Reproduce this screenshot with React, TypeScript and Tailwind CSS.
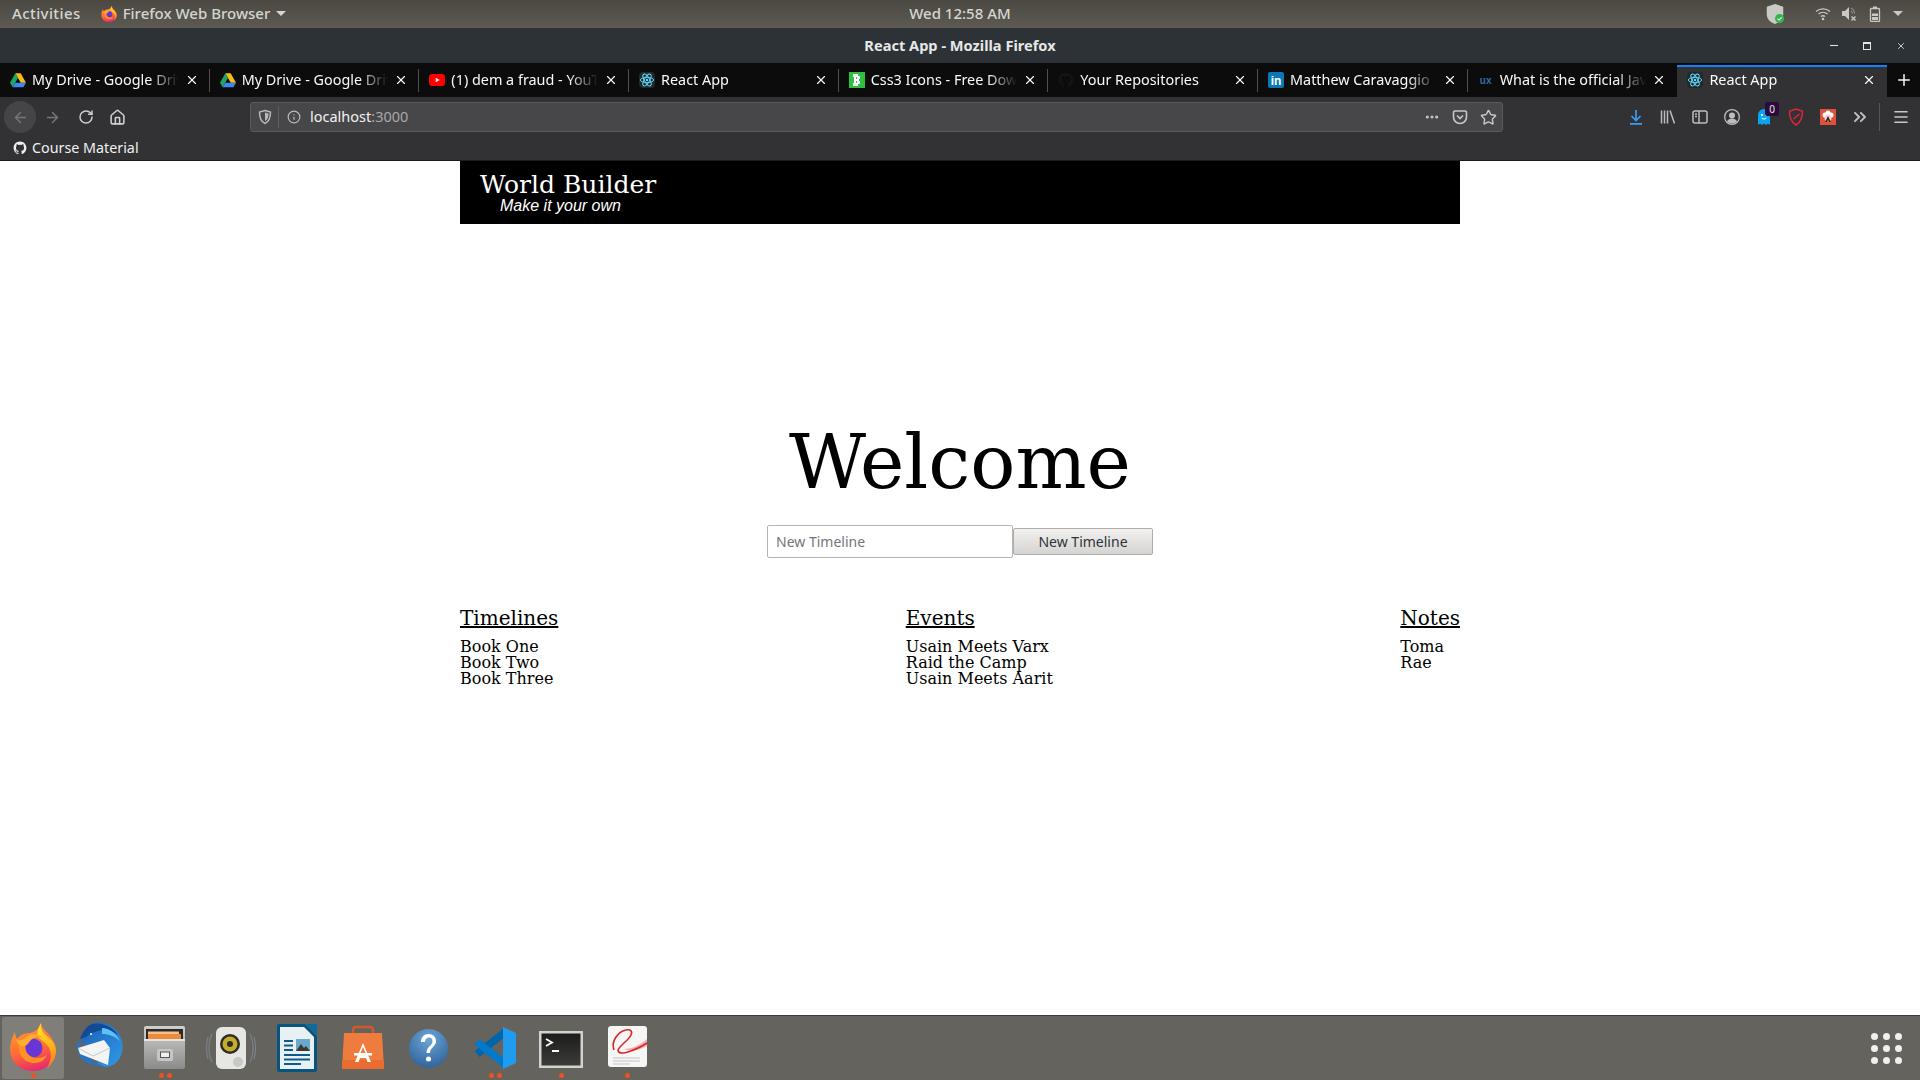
import React from "react";
import {
  ArrowLeft,
  ArrowRight,
  RotateCw,
  Home,
  Info,
  Star,
  X,
  Plus,
  Menu,
  ChevronsRight,
  Ellipsis,
} from "lucide-react";

const ui = "font-['Noto_Sans',sans-serif]";
const serif = "font-['DejaVu_Serif',serif]";

const githubPath =
  "M12 1C5.9 1 1 5.9 1 12c0 4.9 3.2 9 7.5 10.500.6.1.8-.2.8-.5v-2c-3.1.7-3.7-1.300-3.7-1.300-.5-1.300-1.200-1.600-1.200-1.600-1-.7.1-.7.1-.7 1.100.1 1.700 1.100 1.700 1.100 1 1.700 2.600 1.200 3.200.9.1-.7.4-1.200.7-1.500-2.500-.3-5-1.200-5-5.400 0-1.200.4-2.200 1.100-3-.1-.3-.5-1.400.1-2.900 0 0 .9-.3 3 1.100a10.500 10.500 0 0 1 5.500 0c2.100-1.400 3-1.100 3-1.100.6 1.500.2 2.600.1 2.900.7.8 1.100 1.800 1.100 3 0 4.200-2.600 5.100-5 5.400.4.3.8 1 .8 2v3c0 .3.2.6.8.5C19.800 21 23 16.900 23 12c0-6.100-4.900-11-11-11z";

/* ---------- small favicons ---------- */
const DriveIcon = () => (
  <svg viewBox="0 0 24 22" className="w-4 h-4 shrink-0">
    <path d="M8 1h8l8 14h-8z" fill="#f8bc16" />
    <path d="M8 1l4 7-8 14-4-7z" fill="#1fa463" />
    <path d="M8 15h16l-4 7H4z" fill="#4285f4" />
  </svg>
);

const YoutubeIcon = () => (
  <svg viewBox="0 0 24 18" className="w-4 h-4 shrink-0">
    <rect width="24" height="18" rx="5" fill="#f00" />
    <path d="M10 5.500l6 3.500-6 3.500z" fill="#fff" />
  </svg>
);

const ReactIcon = () => (
  <div className="w-4 h-4 rounded-sm bg-[#1e2a2e] flex items-center justify-center shrink-0">
    <svg viewBox="0 0 24 24" className="w-4 h-4" fill="none" stroke="#61dafb" strokeWidth="1.400">
      <ellipse cx="12" cy="12" rx="10" ry="4" />
      <ellipse cx="12" cy="12" rx="10" ry="4" transform="rotate(60 12 12)" />
      <ellipse cx="12" cy="12" rx="10" ry="4" transform="rotate(120 12 12)" />
      <circle cx="12" cy="12" r="1.800" fill="#61dafb" stroke="none" />
    </svg>
  </div>
);

const CssIcon = () => (
  <div className="w-4 h-4 bg-[#2fc043] flex items-center justify-center shrink-0">
    <svg viewBox="0 0 16 16" className="w-4 h-4">
      <path d="M4 2h5v2h2v3h-1v2h1v3H9v2H4v-3h1V5H4z" fill="#fff" />
      <path d="M7 5h1v2H7zM7 9h1v2H7z" fill="#2fc043" />
    </svg>
  </div>
);

const GithubDark = () => (
  <svg viewBox="0 0 24 24" className="w-4 h-4 shrink-0" fill="#141416">
    <path d={githubPath} />
  </svg>
);

const LinkedinIcon = () => (
  <div className="w-4 h-4 bg-[#0a78b5] rounded-[2px] flex items-end justify-center shrink-0 text-white text-[12px] leading-[14px] font-bold font-['Liberation_Sans',sans-serif]">
    in
  </div>
);

const UxIcon = () => (
  <div className="w-4 h-4 flex items-center justify-center shrink-0 text-[#2f6fa8] text-[10px] font-bold font-['Liberation_Sans',sans-serif]">
    ux
  </div>
);

const tabs = [
  { title: "My Drive - Google Drive", icon: <DriveIcon /> },
  { title: "My Drive - Google Drive", icon: <DriveIcon /> },
  { title: "(1) dem a fraud - YouTube", icon: <YoutubeIcon /> },
  { title: "React App", icon: <ReactIcon /> },
  { title: "Css3 Icons - Free Download", icon: <CssIcon /> },
  { title: "Your Repositories", icon: <GithubDark /> },
  { title: "Matthew Caravaggio | LinkedIn", icon: <LinkedinIcon /> },
  { title: "What is the official JavaScript", icon: <UxIcon /> },
  { title: "React App", icon: <ReactIcon />, active: true },
];

const FirefoxLogo = ({ className }: { className: string }) => (
  <svg viewBox="0 0 54 54" className={className}>
    <defs>
      <linearGradient id="ffBody" x1="0.3" y1="0" x2="0.6" y2="1">
        <stop offset="0" stopColor="#ffa02e" />
        <stop offset="0.55" stopColor="#ff6b35" />
        <stop offset="1" stopColor="#e8276e" />
      </linearGradient>
      <linearGradient id="ffTail" x1="0.3" y1="0" x2="0.6" y2="1">
        <stop offset="0" stopColor="#ffe226" />
        <stop offset="0.6" stopColor="#ffb31f" />
        <stop offset="1" stopColor="#ff7a1f" />
      </linearGradient>
    </defs>
    <path d="M9 12c0 3 1 5 2 7 3-4 8-6 13-6 5-1 9-4 11-10 1 6 6 9 10 14 3 4 5 9 5 14 0 9-9 20-23 20C13 51 4 41 4 29c0-6 2-12 5-17z" fill="url(#ffBody)" />
    <path d="M35 3c-1 6 2 10 6 13 5 4 9 8 9 15 0 7-4 13-9 17 3-5 5-12 3-18-2-6-8-9-12-13-2-4 1-10 3-14z" fill="url(#ffTail)" />
    <circle cx="27" cy="28" r="9.500" fill="#6a35d6" />
    <path d="M13 23c-2 10 5 20 15 20 6 0 11-3 13-8-4 3-10 4-15 2-5-2-8-8-6-13z" fill="#ff9226" />
    <path d="M10 19c5 3 8 0 12-3 5-3 12-2 15 2-4-2-9-1-12 2-3 3-3 5-7 6-3 1-7-2-8-7z" fill="#ffad2e" />
  </svg>
);

/* ---------- desktop shell ---------- */
const TopBar = () => (
  <div className={`h-7 shrink-0 grid grid-cols-3 items-center px-3 pb-[1px] text-[15px] font-medium text-[#d6d5d0] bg-gradient-to-b from-[#4a4840] to-[#5c5a52] ${ui}`}>
    <div className="flex items-center">
      <span className="tracking-[0.4px]">Activities</span>
      <FirefoxLogo className="w-[18px] h-[18px] ml-[19px] mr-[5px]" />
      <span>Firefox Web Browser</span>
      <span className="ml-[6px] w-0 h-0 border-x-[5px] border-x-transparent border-t-[5px] border-t-[#d6d5d0]" />
    </div>
    <div className="text-center">Wed 12:58 AM</div>
    <div className="flex items-center justify-end gap-[10px] pr-[5px] text-[#c9c8c4]">
      <svg viewBox="0 0 24 24" className="w-[22px] h-[22px] mr-[19px]">
        <path d="M12 1l9 3v8c0 6-4 9-9 11-5-2-9-5-9-11V4z" fill="#c9c9c5" />
        <circle cx="17" cy="17" r="5" fill="#33b54a" />
        <path d="M14.800 17l1.600 1.600 2.800-2.800" stroke="#fff" strokeWidth="1.200" fill="none" />
      </svg>
      <svg viewBox="0 0 16 16" className="w-4 h-4" fill="none" stroke="currentColor" strokeWidth="1.400">
        <path d="M1 5.500c4-3.500 10-3.500 14 0M3.500 8c2.600-2.200 6.400-2.200 9 0M6 10.500c1.200-1 2.800-1 4 0" />
        <circle cx="8" cy="13" r="1.300" fill="currentColor" stroke="none" />
      </svg>
      <svg viewBox="0 0 16 16" className="w-4 h-4" fill="currentColor">
        <path d="M1 5h3l4-4v13l-4-4H1z" />
        <path d="M10 2c2.200 1.200 3.500 3.200 3.500 5.500M10 5c1 .5 1.500 1.500 1.500 2.500" fill="none" stroke="currentColor" strokeWidth="1.200" opacity="0.500" />
        <path d="M10.500 10.500l4 4m0-4l-4 4" fill="none" stroke="currentColor" strokeWidth="1.400" />
      </svg>
      <svg viewBox="0 0 16 16" className="w-4 h-4" fill="none" stroke="currentColor" strokeWidth="1.300">
        <rect x="3.500" y="2.500" width="9" height="13" rx="1" />
        <path d="M6 0.500h4v2H6z" fill="currentColor" stroke="none" />
        <rect x="5" y="7.500" width="6" height="2.500" fill="currentColor" stroke="none" />
        <rect x="5" y="11" width="6" height="3" fill="currentColor" stroke="none" />
      </svg>
      <span className="w-0 h-0 border-x-[5px] border-x-transparent border-t-[5px] border-t-[#c9c8c4]" />
    </div>
  </div>
);

const TitleBar = () => (
  <div className="h-[35px] shrink-0 bg-[#2d3236] flex items-center relative">
    <div className={`w-full text-center text-[14.6px] font-bold text-[#e6e7e6] ${ui}`}>React App - Mozilla Firefox</div>
    <div className="absolute right-[14px] top-0 h-full flex items-center gap-[25px] text-[#e6e7e6]">
      <span className="w-2 h-px bg-current" />
      <span className="w-2 h-2 border border-current border-t-2" />
      <X size={10} strokeWidth={2} />
    </div>
  </div>
);

const TabStrip = () => (
  <div className={`h-[34px] shrink-0 bg-[#0c0c0d] flex items-end text-[14.4px] text-[#f9f9fa] ${ui}`}>
    {tabs.map((tab, i) => {
      const hideSep = tab.active || tabs[i + 1]?.active;
      return (
        <div
          key={i}
          className={`flex-1 min-w-0 flex items-center gap-[6px] pl-[10px] pr-[11px] relative ${
            tab.active ? "h-[32px] bg-[#323234] border-t-2 border-[#0a84ff] pb-[4px]" : "h-[34px]"
          }`}
        >
          {tab.icon}
          <span className="flex-1 overflow-hidden whitespace-nowrap [mask-image:linear-gradient(to_right,black_80%,transparent)]">
            {tab.title}
          </span>
          <X size={14} strokeWidth={2} className="shrink-0" />
          {!hideSep && <span className="absolute right-0 top-[6px] bottom-[5px] w-px bg-[#4f4f52]" />}
        </div>
      );
    })}
    <div className="w-[33px] h-[34px] shrink-0 flex items-center justify-center">
      <Plus size={18} strokeWidth={2} />
    </div>
  </div>
);

const ShieldIcon = () => (
  <svg viewBox="0 0 16 16" className="w-4 h-4" fill="none" stroke="#b8b8ba" strokeWidth="1.500">
    <path d="M8 1.500l5.500 1.500c0 6-1 9.500-5.500 11.500C3.500 12.500 2.500 9 2.500 3z" />
    <path d="M8 3.500l3.500 1c0 3.500-.7 6-3.500 7.500z" fill="#b8b8ba" stroke="none" />
  </svg>
);

const PocketIcon = () => (
  <svg viewBox="0 0 16 16" className="w-4 h-4" fill="none" stroke="#c8c8ca" strokeWidth="1.600">
    <path d="M1.500 3.500a1.500 1.500 0 0 1 1.500-1.500h10a1.500 1.500 0 0 1 1.500 1.500V8a6.500 6.500 0 0 1-13 0z" />
    <path d="M5 6.500l3 3 3-3" />
  </svg>
);

const DownloadIcon = () => (
  <svg viewBox="0 0 16 16" className="w-4 h-4" fill="none" stroke="#3c9af5" strokeWidth="1.700">
    <path d="M8 1v10M3.500 7l4.500 4.500L12.500 7M2 14.800h12" />
  </svg>
);

const LibraryIcon = () => (
  <svg viewBox="0 0 16 16" className="w-4 h-4" fill="none" stroke="#bdbdbf" strokeWidth="1.500">
    <path d="M1.500 1.500v13M4.500 1.500v13M7.500 1.500v13M10 1.500l4.500 13" />
  </svg>
);

const SidebarIcon = () => (
  <svg viewBox="0 0 16 16" className="w-4 h-4" fill="none" stroke="#bdbdbf" strokeWidth="1.500">
    <rect x="1" y="2" width="14" height="12" rx="2" />
    <path d="M7 2v12" />
    <path d="M3 5h2M3 7.500h2" />
  </svg>
);

const AccountIcon = () => (
  <svg viewBox="0 0 16 16" className="w-4 h-4" fill="#bdbdbf">
    <path fillRule="evenodd" d="M8 0a8 8 0 1 1 0 16A8 8 0 0 1 8 0zm0 1.300a6.700 6.700 0 1 0 0 13.400A6.700 6.700 0 0 0 8 1.300z" />
    <circle cx="8" cy="6.500" r="3" />
    <path d="M3 12.300c1-2 3-2.800 5-2.800s4 .8 5 2.800A6 6 0 0 1 8 14.500a6 6 0 0 1-5-2.200z" />
  </svg>
);

const GhostIcon = () => (
  <div className="relative w-4 h-5 flex items-center">
    <svg viewBox="0 0 16 20" className="w-4 h-5">
      <path d="M2 8a6 6 0 0 1 12 0v10l-2-1.500L10 18l-2-1.500L6 18l-2-1.500L2 18z" fill="#0aa5f0" />
      <circle cx="6" cy="8" r="1" fill="#fff" />
      <circle cx="10" cy="8" r="1" fill="#fff" />
      <path d="M5.500 11c1.500 1.300 3.500 1.300 5 0" stroke="#fff" fill="none" />
    </svg>
    <span className="absolute -top-[5px] left-[9px] w-[14px] h-[14px] rounded-[2px] bg-[#2c0a3e] text-[#e6e6e6] text-[10px] leading-[14px] text-center">0</span>
  </div>
);

const RedShieldIcon = () => (
  <svg viewBox="0 0 16 18" className="w-4 h-[18px]" fill="none" stroke="#e2233f" strokeWidth="1.500">
    <path d="M8 1l6.500 2.200c0 7-1.500 10.800-6.500 13.800C3 14 1.500 10.200 1.500 3.200z" />
    <path d="M5.500 11l6-5" />
  </svg>
);

const RedBoxIcon = () => (
  <svg viewBox="0 0 16 16" className="w-4 h-4">
    <rect width="16" height="16" fill="#e1503a" />
    <circle cx="5" cy="6" r="2.500" fill="#fff" />
    <circle cx="11" cy="6" r="2.500" fill="#fff" />
    <circle cx="8" cy="4" r="2.500" fill="#fff" />
    <circle cx="8" cy="9" r="3.500" fill="#f3d5cf" />
    <path d="M8 7l3 6H9l-1-2-1 2H5z" fill="#3a2320" />
  </svg>
);

const Toolbar = () => (
  <div className={`h-[37px] pt-[3px] shrink-0 bg-[#323234] flex items-center ${ui}`}>
    <div className="w-[250px] shrink-0 flex items-center pl-[4px] text-[#d0d0d2]">
      <div className="w-8 h-8 rounded-full bg-[#454547] flex items-center justify-center text-[#77777a]">
        <ArrowLeft size={17} strokeWidth={2} />
      </div>
      <div className="w-[33px] flex justify-center text-[#77777a]">
        <ArrowRight size={17} strokeWidth={2} />
      </div>
      <div className="w-[33px] flex justify-center">
        <RotateCw size={16} strokeWidth={2.200} />
      </div>
      <div className="w-[31px] flex justify-center">
        <Home size={17} strokeWidth={2.200} />
      </div>
    </div>
    <div className="w-[1253px] shrink-0 h-[30px] rounded-[3px] bg-[#474749] border border-[#5a5a5c] flex items-center text-[14.5px]">
      <div className="w-[28px] h-[22px] flex items-center justify-center border-r border-[#5e5e60]">
        <ShieldIcon />
      </div>
      <Info size={14} className="ml-[8px] text-[#bdbdbf]" />
      <span className="ml-[9px] text-[#f2f2f3]">localhost</span>
      <span className="text-[#a8a8aa]">:3000</span>
      <div className="ml-auto flex items-center gap-[12px] pr-[5px] text-[#c8c8ca]">
        <Ellipsis size={16} strokeWidth={2.600} />
        <PocketIcon />
        <Star size={17} strokeWidth={2} />
      </div>
    </div>
    <div className="flex-1 flex items-center justify-end h-full pr-[1px]">
      <div className="flex items-center text-[#bdbdbf]">
        <div className="w-8 flex justify-center"><DownloadIcon /></div>
        <div className="w-8 flex justify-center"><LibraryIcon /></div>
        <div className="w-8 flex justify-center"><SidebarIcon /></div>
        <div className="w-8 flex justify-center"><AccountIcon /></div>
        <div className="w-8 flex justify-center"><GhostIcon /></div>
        <div className="w-8 flex justify-center"><RedShieldIcon /></div>
        <div className="w-8 flex justify-center"><RedBoxIcon /></div>
        <div className="w-8 flex justify-center"><ChevronsRight size={20} strokeWidth={2.400} /></div>
      </div>
      <div className="w-px h-[28px] bg-[#56565a] mx-[3px]" />
      <div className="w-[36px] flex justify-center text-[#c8c8ca]"><Menu size={18} strokeWidth={2.200} /></div>
    </div>
  </div>
);

const BookmarkBar = () => (
  <div className={`h-[27px] pt-[2px] shrink-0 bg-[#323234] flex items-center pl-[13px] gap-[5px] text-[14.3px] text-[#f0f0f1] border-b border-[#1c1c1e] ${ui}`}>
    <svg viewBox="0 0 24 24" className="w-[14px] h-[14px]" fill="#f0f0f1">
      <path d={githubPath} />
    </svg>
    <span>Course Material</span>
  </div>
);

/* ---------- dock icons ---------- */
const FirefoxDock = () => <FirefoxLogo className="w-[54px] h-[54px]" />;

const ThunderbirdDock = () => (
  <svg viewBox="0 0 54 54" className="w-[54px] h-[54px]">
    <defs>
      <linearGradient id="tbBody" x1="0" y1="0" x2="1" y2="1">
        <stop offset="0" stopColor="#1b5fb5" />
        <stop offset="1" stopColor="#2f9be8" />
      </linearGradient>
    </defs>
    <path d="M20 4c6-3 17-1 23 5 6 6 9 14 7 23-2 9-9 15-17 15l-8-3 6-16-22-5c2-7 5-16 11-19z" fill="url(#tbBody)" />
    <path d="M20 4c9-2 20 2 26 11-7-5-14-6-20-4-4 1-9 3-12 6l-6 2c2-6 6-13 12-15z" fill="#114a97" />
    <path d="M30 8c7 0 14 5 18 13-6-5-11-7-18-7z" fill="#5fc0f5" />
    <path d="M6 20c-2 8 0 15 5 20 5 4 13 6 20 6-7-2-14-7-19-14z" fill="#2673c6" />
    <path d="M6 28l26-8 6 8-2 17-28-11z" fill="#f4f4f4" />
    <path d="M6 28l15 8 17-8" fill="none" stroke="#c8c8c8" strokeWidth="1" />
    <circle cx="19" cy="14" r="1" fill="#fff" />
  </svg>
);

const FilesDock = () => (
  <svg viewBox="0 0 54 54" className="w-[54px] h-[54px]">
    <defs>
      <linearGradient id="cabBody" x1="0" y1="0" x2="0" y2="1">
        <stop offset="0" stopColor="#cfcfcd" />
        <stop offset="1" stopColor="#8b8b89" />
      </linearGradient>
    </defs>
    <rect x="6" y="6" width="41" height="43" rx="2" fill="url(#cabBody)" />
    <rect x="8" y="9" width="37" height="10" fill="#2a2a2a" />
    <rect x="10" y="14" width="33" height="5" fill="#ee8a3c" />
    <rect x="10" y="11.500" width="31" height="2.500" fill="#f4c08c" />
    <rect x="6" y="19" width="41" height="2" fill="#e4e4e2" />
    <rect x="19" y="29" width="16" height="12" rx="2" fill="#c6c6c4" />
    <rect x="22.500" y="32" width="9" height="5.500" fill="#f0f0ee" stroke="#555" strokeWidth="1" />
  </svg>
);

const SpeakerDock = () => (
  <svg viewBox="0 0 54 54" className="w-[54px] h-[54px]">
    <path d="M8 14c-4 8-4 20 0 28M4 17c-2 7-2 15 0 22M46 14c4 8 4 20 0 28M50 17c2 7 2 15 0 22" stroke="#7b8188" strokeWidth="1.200" fill="none" />
    <rect x="12" y="7" width="30" height="42" rx="6" fill="#e6e6e2" />
    <circle cx="26" cy="24" r="10" fill="#2e2c22" />
    <circle cx="26" cy="24" r="7.500" fill="#c4ac2c" />
    <circle cx="26" cy="24" r="3" fill="#2e2c22" />
    <circle cx="34" cy="42" r="5" fill="#c8c8c4" />
  </svg>
);

const WriterDock = () => (
  <svg viewBox="0 0 54 54" className="w-[54px] h-[54px]">
    <path d="M7 6a2 2 0 0 1 2-2h26l12 12v34a2 2 0 0 1-2 2H9a2 2 0 0 1-2-2z" fill="#06557f" />
    <path d="M10 7h24l10 10v32H10z" fill="#e8f0f4" />
    <path d="M36 4h11v11z" fill="#0b6b9c" />
    <rect x="14" y="20" width="9" height="2" fill="#0b5c88" />
    <rect x="14" y="24.500" width="9" height="2" fill="#0b5c88" />
    <rect x="14" y="29" width="9" height="2" fill="#0b5c88" />
    <rect x="14" y="34" width="26" height="2" fill="#0b5c88" />
    <rect x="14" y="38.500" width="26" height="2" fill="#0b5c88" />
    <rect x="14" y="43" width="17" height="2" fill="#0b5c88" />
    <rect x="26" y="19" width="14" height="12" fill="#6aa8cc" />
    <path d="M26 31l5-7 3 4 2-2 4 5z" fill="#3a3a32" />
  </svg>
);

const StoreDock = () => (
  <svg viewBox="0 0 54 54" className="w-[54px] h-[54px]">
    <path d="M17 22V10a3 3 0 0 1 3-3h14a3 3 0 0 1 3 3v12" fill="none" stroke="#d25a26" strokeWidth="2.500" />
    <path d="M8 13h38l2 36H6z" fill="#ee7c3f" />
    <path d="M6 40h42v9H6z" fill="#e96d30" />
    <path d="M27 23l-8 19h3.500l1.500-4h6l1.500 4H35zM24.500 33l2.500-6 2.500 6z" fill="#fff" fillRule="evenodd" />
    <rect x="18" y="33" width="18" height="2.500" fill="#fff" />
  </svg>
);

const HelpDock = () => (
  <svg viewBox="0 0 54 54" className="w-[54px] h-[54px]">
    <defs>
      <radialGradient id="helpBg" cx="0.5" cy="0.25" r="0.8">
        <stop offset="0" stopColor="#6fa6d6" />
        <stop offset="1" stopColor="#2b6199" />
      </radialGradient>
    </defs>
    <circle cx="26.500" cy="28.500" r="19.500" fill="url(#helpBg)" />
    <path d="M19 22c0-5 3-8 7.500-8 4.500 0 7.500 3 7.500 7 0 6-6 6-6 12h-3.500c0-7 6-7 6-12 0-2-1.500-3.500-3.500-3.500S23 19 23 22z" fill="#fff" />
    <circle cx="26.500" cy="39" r="2.500" fill="#fff" />
  </svg>
);

const VscodeDock = () => (
  <svg viewBox="0 0 54 54" className="w-[54px] h-[54px]">
    <path d="M37 12L9 34" stroke="#0065a9" strokeWidth="7.500" />
    <path d="M37 44L9 22" stroke="#007acc" strokeWidth="7.500" />
    <path d="M35 7l13 6v30l-13 6z" fill="#1f9cf0" />
  </svg>
);

const TerminalDock = () => (
  <svg viewBox="0 0 54 54" className="w-[54px] h-[54px]">
    <defs>
      <linearGradient id="termBg" x1="0" y1="0" x2="0" y2="1">
        <stop offset="0" stopColor="#1c1c1a" />
        <stop offset="1" stopColor="#3c3c3a" />
      </linearGradient>
    </defs>
    <rect x="5" y="11" width="44" height="37" fill="#d2d2cf" />
    <rect x="7.500" y="13.500" width="39" height="32" fill="url(#termBg)" />
    <path d="M12 19l6 3.500-6 3.500" stroke="#fff" strokeWidth="1.800" fill="none" />
    <path d="M18 31h7" stroke="#fff" strokeWidth="2" />
  </svg>
);

const PdfDock = () => (
  <svg viewBox="0 0 54 54" className="w-[54px] h-[54px]">
    <rect x="8" y="6" width="39" height="41" rx="3" fill="#f6f6f4" />
    <path d="M24 29c8 0 16-4 23-10v7c-7 4-15 6-23 3z" fill="#efb1b1" />
    <path d="M14 30c-3-8 3-18 12-20 4-1 7 1 5 5-3 6-10 9-13 15 0 3 4 4 10 2 6-2 13-5 19-9" stroke="#d8272d" strokeWidth="1.600" fill="none" />
    <path d="M13 38h27M13 41h27M13 44h17" stroke="#c4c4c2" strokeWidth="1" />
  </svg>
);

const dockItems = [
  { icon: <FirefoxDock />, dots: 1, active: true },
  { icon: <ThunderbirdDock />, dots: 0 },
  { icon: <FilesDock />, dots: 2 },
  { icon: <SpeakerDock />, dots: 0 },
  { icon: <WriterDock />, dots: 0 },
  { icon: <StoreDock />, dots: 0 },
  { icon: <HelpDock />, dots: 0 },
  { icon: <VscodeDock />, dots: 2 },
  { icon: <TerminalDock />, dots: 1 },
  { icon: <PdfDock />, dots: 1 },
];

const Dock = () => (
  <div className="h-[65px] shrink-0 bg-[#65635e] border-t border-[#3c3b38] flex items-center justify-between pl-[2px] pr-[18px]">
    <div className="flex">
      {dockItems.map((item, i) => (
        <div
          key={i}
          className={`w-[62px] h-[62px] mr-[4px] rounded-[3px] flex flex-col items-center justify-between ${item.active ? "bg-[#7f7e79]" : ""}`}
        >
          <div className="h-[56px] pt-[4px] flex items-center justify-center">{item.icon}</div>
          <div className="h-[6px] flex gap-[3px]">
            {Array.from({ length: item.dots }).map((_, d) => (
              <span key={d} className="w-[5px] h-[5px] rounded-full bg-[#e95420]" />
            ))}
          </div>
        </div>
      ))}
    </div>
    <div className="grid grid-cols-3 gap-[5px]">
      {Array.from({ length: 9 }).map((_, i) => (
        <span key={i} className="w-[7px] h-[7px] rounded-full bg-[#f0f0ee]" />
      ))}
    </div>
  </div>
);

/* ---------- the actual page ---------- */
const columns = [
  { title: "Timelines", items: ["Book One", "Book Two", "Book Three"] },
  { title: "Events", items: ["Usain Meets Varx", "Raid the Camp", "Usain Meets Aarit"] },
  { title: "Notes", items: ["Toma", "Rae"] },
];

const Page = () => (
  <div className={`flex-1 min-h-0 bg-white text-black ${serif}`}>
    <div className="w-[1000px] mx-auto">
      <header className="h-[63px] bg-black text-white pl-5 pt-[9px]">
        <h2 className="text-[25px] leading-[30px]">World Builder</h2>
        <p className="pl-5 text-[16px] leading-[12px] italic font-['Liberation_Sans',sans-serif]">Make it your own</p>
      </header>

      <h1 className="mt-[195px] text-center text-[75px] leading-[86px]">Welcome</h1>

      <div className={`mt-[20px] flex justify-center items-center text-[14px] ${ui}`}>
        <input
          placeholder="New Timeline"
          className="w-[246px] h-[33px] px-2 bg-white border border-[#b5b5b5] rounded-[2px] placeholder:text-[#75757a]"
        />
        <button className="w-[140px] h-[27px] bg-gradient-to-b from-[#f2f1f0] to-[#d6d4d2] border border-[#b0aeab] rounded-[2px] text-[#2e3436]">
          New Timeline
        </button>
      </div>

      <div className="mt-[48px] flex justify-between">
        {columns.map((col) => (
          <div key={col.title}>
            <h3 className="text-[20px] leading-[24px] underline mb-[9px]">{col.title}</h3>
            <ul className="text-[16px] leading-[16px]">
              {col.items.map((it) => (
                <li key={it}>{it}</li>
              ))}
            </ul>
          </div>
        ))}
      </div>
    </div>
  </div>
);

const App = () => {
  return (
    <div className="h-screen flex flex-col overflow-hidden">
      <TopBar />
      <TitleBar />
      <TabStrip />
      <Toolbar />
      <BookmarkBar />
      <Page />
      <Dock />
    </div>
  );
};

export default App;
